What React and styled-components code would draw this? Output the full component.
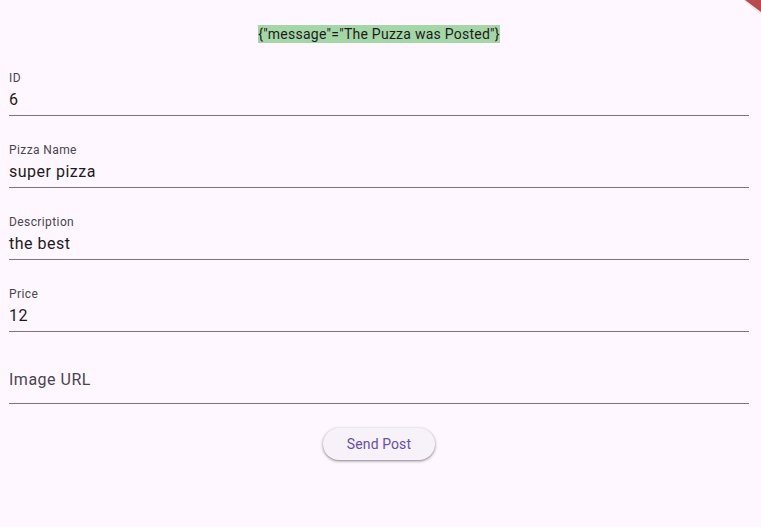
import React from "react";
import styled, { createGlobalStyle } from "styled-components";

const Global = createGlobalStyle`
  html, body {
    margin: 0;
    padding: 0;
    background: #fef7ff;
    font-family: Roboto, "Noto Sans", sans-serif;
    overflow: hidden;
  }
  * { box-sizing: border-box; }
`;

const Page = styled.div`
  position: relative;
  width: 761px;
  height: 527px;
  background: #fef7ff;
  padding: 0 12px 0 9px;
  display: flex;
  flex-direction: column;
`;

const MessageRow = styled.div`
  height: 44px;
  padding-top: 25px;
  display: flex;
  justify-content: center;
`;

const Message = styled.span`
  display: inline-block;
  background: #a5d6a7;
  color: #1d1b20;
  font-size: 14px;
  line-height: 18px;
  height: 18px;
  letter-spacing: 0.25px;
`;

const Field = styled.div`
  height: 72px;
  display: flex;
  flex-direction: column;
  padding-top: ${(p) => (p.$empty ? "36px" : "26px")};
  border-bottom: 1px solid #79747e;
`;

const Label = styled.div`
  font-size: 12px;
  line-height: 16px;
  height: 16px;
  color: #49454f;
  letter-spacing: 0.4px;
  margin-bottom: 2px;
`;

const Value = styled.div`
  font-size: 16px;
  line-height: 24px;
  color: ${(p) => (p.$placeholder ? "#49454f" : "#1d1b20")};
  letter-spacing: 0.5px;
`;

const ButtonRow = styled.div`
  display: flex;
  justify-content: center;
  padding-top: 24px;
`;

const Button = styled.button`
  height: 32px;
  padding: 0 24px;
  border: none;
  border-radius: 16px;
  background: #f7f2fa;
  color: #6750a4;
  font-family: Roboto, "Noto Sans", sans-serif;
  font-size: 14px;
  font-weight: 400;
  letter-spacing: 0.1px;
  box-shadow: 0 1px 2px rgba(0, 0, 0, 0.3), 0 1px 3px 1px rgba(0, 0, 0, 0.15);
  cursor: pointer;
`;

const Banner = styled.svg`
  position: absolute;
  top: 0;
  right: 0;
  width: 20px;
  height: 16px;
`;

const fields = [
  { label: "ID", value: "6" },
  { label: "Pizza Name", value: "super pizza" },
  { label: "Description", value: "the best" },
  { label: "Price", value: "12" },
];

export default function App() {
  return (
    <>
      <Global />
      <Page>
        <Banner viewBox="0 0 20 16">
          <polygon points="2,0 20,0 20,15" fill="rgba(0,0,0,0.06)" />
          <polygon points="4,0 20,0 20,12" fill="#b84a4c" />
        </Banner>
        <MessageRow>
          <Message>{'{"message"="The Puzza was Posted"}'}</Message>
        </MessageRow>
        {fields.map((f) => (
          <Field key={f.label}>
            <Label>{f.label}</Label>
            <Value>{f.value}</Value>
          </Field>
        ))}
        <Field $empty>
          <Value $placeholder>Image URL</Value>
        </Field>
        <ButtonRow>
          <Button>Send Post</Button>
        </ButtonRow>
      </Page>
    </>
  );
}
